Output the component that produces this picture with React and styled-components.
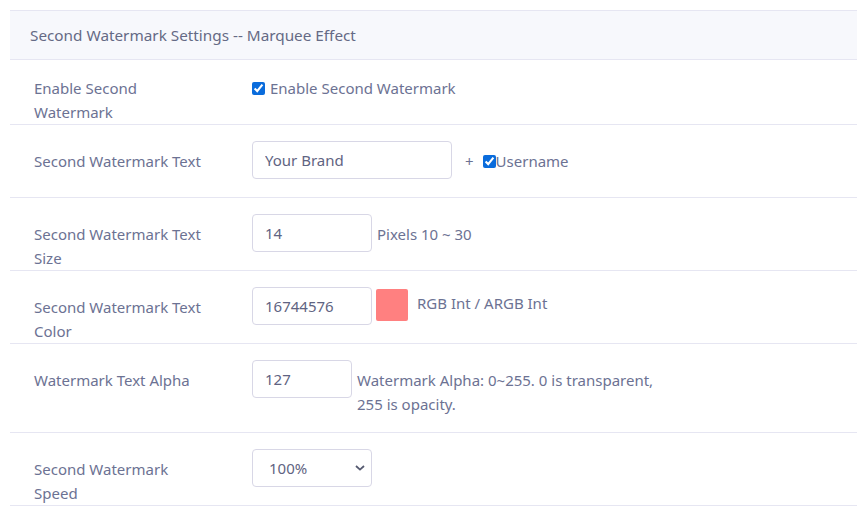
import React from "react";
import styled, { createGlobalStyle } from "styled-components";

const GlobalStyle = createGlobalStyle`
  html, body {
    margin: 0;
    padding: 0;
    background: #ffffff;
  }
  body {
    font-family: "Noto Sans", "Open Sans", "Liberation Sans", sans-serif;
    font-size: 15px;
    color: #6c7293;
  }
`;

const Panel = styled.section`
  margin: 10px 0 0 10px;
  width: 847px;
`;

const PanelHeader = styled.header`
  height: 48px;
  display: flex;
  align-items: center;
  padding: 0 20px;
  background: #f7f8fc;
  border-top: 1px solid #e6e6f2;
  border-bottom: 1px solid #e6e6f2;
  color: #656a85;
  font-size: 15.3px;
`;

const Row = styled.div`
  display: grid;
  grid-template-columns: 218px 1fr;
  padding-left: 24px;
  min-height: ${(p) => p.$minHeight}px;
  border-bottom: 1px solid #e6e6f2;
  box-sizing: border-box;
`;

const Label = styled.div`
  padding-top: ${(p) => p.$top}px;
  width: 174px;
  line-height: 24px;
  font-size: 15px;
  color: #6c7293;
`;

const Control = styled.div`
  display: flex;
  align-items: flex-start;
  padding: ${(p) => p.$top}px 0 16px;
  line-height: 24px;
  font-size: 15px;
`;

const TextInput = styled.input`
  box-sizing: border-box;
  width: ${(p) => p.$width}px;
  height: 38px;
  margin: 0;
  padding: 0 12px;
  border: 1px solid #d8d7e6;
  border-radius: 4px;
  font: inherit;
  font-size: 15px;
  color: #5f6482;
  background: #fff;
  outline: none;
`;

const CheckLabel = styled.label`
  display: inline-flex;
  align-items: center;
  gap: ${(p) => p.$gap}px;
  color: #6c7293;
`;

const Check = styled.input`
  width: 13px;
  height: 13px;
  margin: 0;
  accent-color: #0a6cdc;
`;

const Plus = styled.span`
  margin: 0 9px 0 13px;
`;

const Hint = styled.span`
  margin-left: ${(p) => p.$gap}px;
  padding-top: ${(p) => p.$top}px;
  max-width: 305px;
`;

const Swatch = styled.span`
  width: 32px;
  height: 32px;
  margin: 2px 0 0 4px;
  border-radius: 2px;
  background: ${(p) => p.$color};
`;

const Select = styled.select`
  box-sizing: border-box;
  width: 120px;
  height: 38px;
  margin: 0;
  padding: 0 12px 0 16px;
  border: 1px solid #d8d7e6;
  border-radius: 4px;
  font: inherit;
  font-size: 15px;
  color: #5f6482;
  appearance: none;
  background: #fff
    url("data:image/svg+xml,%3Csvg xmlns='http://www.w3.org/2000/svg' width='10' height='6' viewBox='0 0 10 6'%3E%3Cpath d='M1 1l4 3.6L9 1' fill='none' stroke='%23555a70' stroke-width='1.8'/%3E%3C/svg%3E")
    no-repeat right 6px center;
  outline: none;
`;

export default function App() {
  return (
    <>
      <GlobalStyle />
      <Panel>
        <PanelHeader>Second Watermark Settings -- Marquee Effect</PanelHeader>

        <Row $minHeight={65}>
          <Label $top={16}>Enable Second Watermark</Label>
          <Control $top={16}>
            <CheckLabel $gap={5}>
              <Check type="checkbox" defaultChecked />
              Enable Second Watermark
            </CheckLabel>
          </Control>
        </Row>

        <Row $minHeight={73}>
          <Label $top={24}>Second Watermark Text</Label>
          <Control $top={16}>
            <TextInput $width={200} defaultValue="Your Brand" />
            <Hint $gap={0} $top={8}>
              <Plus>+</Plus>
            </Hint>
            <Hint $gap={0} $top={8}>
              <CheckLabel $gap={0}>
                <Check type="checkbox" defaultChecked />
                Username
              </CheckLabel>
            </Hint>
          </Control>
        </Row>

        <Row $minHeight={73}>
          <Label $top={24}>Second Watermark Text Size</Label>
          <Control $top={16}>
            <TextInput $width={120} defaultValue="14" />
            <Hint $gap={5} $top={8}>Pixels 10 ~ 30</Hint>
          </Control>
        </Row>

        <Row $minHeight={73}>
          <Label $top={24}>Second Watermark Text Color</Label>
          <Control $top={16}>
            <TextInput $width={120} defaultValue="16744576" />
            <Swatch $color="#ff8080" />
            <Hint $gap={9} $top={4}>RGB Int / ARGB Int</Hint>
          </Control>
        </Row>

        <Row $minHeight={89}>
          <Label $top={24}>Watermark Text Alpha</Label>
          <Control $top={16}>
            <TextInput $width={100} defaultValue="127" />
            <Hint $gap={5} $top={8}>
              Watermark Alpha: 0~255. 0 is transparent, 255 is opacity.
            </Hint>
          </Control>
        </Row>

        <Row $minHeight={73}>
          <Label $top={24}>Second Watermark Speed</Label>
          <Control $top={16}>
            <Select defaultValue="100%">
              <option>50%</option>
              <option>100%</option>
              <option>150%</option>
              <option>200%</option>
            </Select>
          </Control>
        </Row>
      </Panel>
    </>
  );
}
